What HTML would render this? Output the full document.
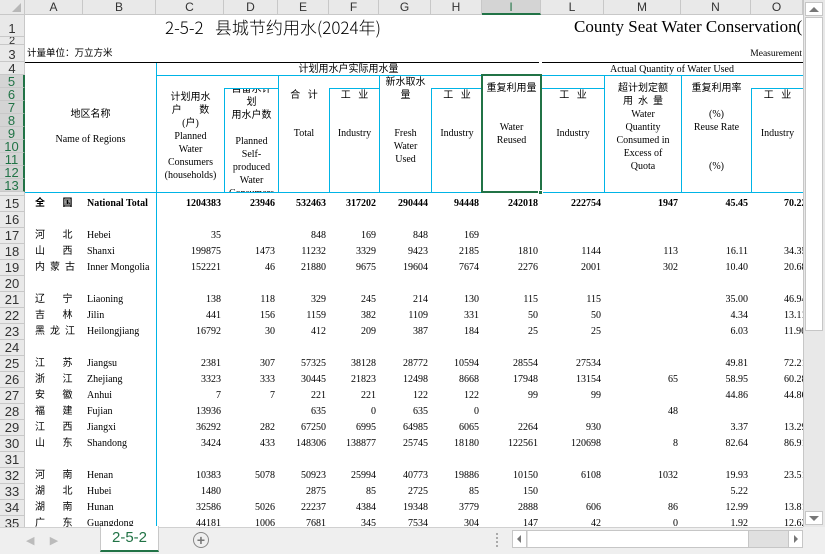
<!DOCTYPE html>
<html><head><meta charset="utf-8">
<style>
*{margin:0;padding:0;box-sizing:border-box}
body{width:825px;height:554px;overflow:hidden;background:#fff;position:relative;font-family:"Liberation Serif","Noto Serif CJK SC",serif;color:#000}
.a{position:absolute}
.ch{position:absolute;top:0;height:15px;background:#e9e9e9;border-right:1px solid #c8c8c8;border-bottom:1px solid #c8c8c8;font:12px "Liberation Sans",sans-serif;color:#333;text-align:center;line-height:15px}
.rh{position:absolute;left:0;width:25px;background:#e9e9e9;border-bottom:1px solid #c8c8c8;border-right:1px solid #c8c8c8;font:13px "Liberation Sans",sans-serif;color:#333;text-align:center;overflow:hidden}
.sel{background:#d4d4d4;color:#217346}
.cy{position:absolute;background:#00b4e6}
.t{position:absolute;text-align:center;font-size:10px;line-height:13px}
.cn{font-family:"Liberation Serif","Noto Sans CJK SC",sans-serif}
#data{position:absolute;left:25px;top:196px;width:778px;height:331px;overflow:hidden}
table{border-collapse:collapse;table-layout:fixed;width:834px;font-size:10px}
td{height:16px;padding:0 3px 0 0;text-align:right;white-space:nowrap;overflow:hidden;line-height:16px}
td.p{text-align:left;padding-left:10px;font-family:"Liberation Serif","Noto Sans CJK SC",sans-serif;letter-spacing:0}
td.e{text-align:left;padding-left:4px}
td.o{text-align:left;padding-left:33px}
tr.b td{font-weight:bold}
</style></head><body>
<div class="ch" style="left:0;width:25px;background:#e9e9e9"><div class="a" style="right:3px;bottom:2px;width:0;height:0;border-left:9px solid transparent;border-bottom:9px solid #b8b8b8"></div></div>
<div class="ch" style="left:25px;width:58px">A</div>
<div class="ch" style="left:83px;width:73px">B</div>
<div class="ch" style="left:156px;width:68px">C</div>
<div class="ch" style="left:224px;width:54px">D</div>
<div class="ch" style="left:278px;width:51px">E</div>
<div class="ch" style="left:329px;width:50px">F</div>
<div class="ch" style="left:379px;width:52px">G</div>
<div class="ch" style="left:431px;width:51px">H</div>
<div class="ch sel" style="left:482px;width:59px;border-bottom:2px solid #217346">I</div>
<div class="ch" style="left:541px;width:63px">L</div>
<div class="ch" style="left:604px;width:77px">M</div>
<div class="ch" style="left:681px;width:70px">N</div>
<div class="ch" style="left:751px;width:52px">O</div>
<div class="rh" style="top:15px;height:22px;line-height:28px">1</div>
<div class="rh" style="top:37px;height:8px;line-height:8px;font-size:11px">2</div>
<div class="rh" style="top:45px;height:17px;line-height:19px">3</div>
<div class="rh" style="top:62px;height:13px;line-height:14px">4</div>
<div class="rh sel" style="top:75px;height:13px;line-height:14px;border-right:2px solid #217346">5</div>
<div class="rh sel" style="top:88px;height:13px;line-height:14px;border-right:2px solid #217346">6</div>
<div class="rh sel" style="top:101px;height:13px;line-height:14px;border-right:2px solid #217346">7</div>
<div class="rh sel" style="top:114px;height:13px;line-height:14px;border-right:2px solid #217346">8</div>
<div class="rh sel" style="top:127px;height:13px;line-height:14px;border-right:2px solid #217346">9</div>
<div class="rh sel" style="top:140px;height:13px;line-height:14px;border-right:2px solid #217346">10</div>
<div class="rh sel" style="top:153px;height:13px;line-height:14px;border-right:2px solid #217346">11</div>
<div class="rh sel" style="top:166px;height:13px;line-height:14px;border-right:2px solid #217346">12</div>
<div class="rh sel" style="top:179px;height:13px;line-height:14px;border-right:2px solid #217346">13</div>
<div class="rh" style="top:192px;height:4px"></div>
<div class="rh" style="top:196px;height:16px;line-height:16px">15</div>
<div class="rh" style="top:212px;height:16px;line-height:16px">16</div>
<div class="rh" style="top:228px;height:16px;line-height:16px">17</div>
<div class="rh" style="top:244px;height:16px;line-height:16px">18</div>
<div class="rh" style="top:260px;height:16px;line-height:16px">19</div>
<div class="rh" style="top:276px;height:16px;line-height:16px">20</div>
<div class="rh" style="top:292px;height:16px;line-height:16px">21</div>
<div class="rh" style="top:308px;height:16px;line-height:16px">22</div>
<div class="rh" style="top:324px;height:16px;line-height:16px">23</div>
<div class="rh" style="top:340px;height:16px;line-height:16px">24</div>
<div class="rh" style="top:356px;height:16px;line-height:16px">25</div>
<div class="rh" style="top:372px;height:16px;line-height:16px">26</div>
<div class="rh" style="top:388px;height:16px;line-height:16px">27</div>
<div class="rh" style="top:404px;height:16px;line-height:16px">28</div>
<div class="rh" style="top:420px;height:16px;line-height:16px">29</div>
<div class="rh" style="top:436px;height:16px;line-height:16px">30</div>
<div class="rh" style="top:452px;height:16px;line-height:16px">31</div>
<div class="rh" style="top:468px;height:16px;line-height:16px">32</div>
<div class="rh" style="top:484px;height:16px;line-height:16px">33</div>
<div class="rh" style="top:500px;height:16px;line-height:16px">34</div>
<div class="rh" style="top:516px;height:16px;line-height:16px">35</div>

<div class="a cn" style="left:165px;top:16px;font-size:17px;line-height:22px;white-space:nowrap;font-family:'Noto Sans CJK SC',sans-serif;font-weight:300">2-5-2&nbsp;&nbsp;&nbsp;县城节约用水(2024年)</div>
<div class="a" style="left:574px;top:16px;width:229px;overflow:hidden;font-size:17px;line-height:22px;white-space:nowrap">County Seat Water Conservation(</div>
<div class="a cn" style="left:27px;top:48px;font-size:9.5px;line-height:13px">计量单位：万立方米</div>
<div class="a" style="left:700px;top:48px;width:102px;text-align:right;font-size:9.5px;line-height:13px">Measurement</div>
<div class="a" style="left:25px;top:62px;width:514px;height:1px;background:#000"></div>
<div class="a" style="left:542px;top:62px;width:261px;height:1px;background:#000"></div>
<div class="cy" style="left:156px;top:63px;width:1px;height:464px"></div>
<div class="cy" style="left:156px;top:75px;width:647px;height:1px"></div>
<div class="cy" style="left:25px;top:192px;width:778px;height:1px"></div>
<div class="cy" style="left:224px;top:88px;width:1px;height:104px"></div>
<div class="cy" style="left:224px;top:88px;width:54px;height:1px"></div>
<div class="cy" style="left:278px;top:75px;width:1px;height:117px"></div>
<div class="cy" style="left:329px;top:88px;width:1px;height:104px"></div>
<div class="cy" style="left:329px;top:88px;width:50px;height:1px"></div>
<div class="cy" style="left:379px;top:75px;width:1px;height:117px"></div>
<div class="cy" style="left:431px;top:88px;width:1px;height:104px"></div>
<div class="cy" style="left:431px;top:88px;width:51px;height:1px"></div>
<div class="cy" style="left:541px;top:75px;width:1px;height:117px"></div>
<div class="cy" style="left:541px;top:88px;width:63px;height:1px"></div>
<div class="cy" style="left:604px;top:75px;width:1px;height:117px"></div>
<div class="cy" style="left:681px;top:75px;width:1px;height:117px"></div>
<div class="cy" style="left:751px;top:88px;width:1px;height:104px"></div>
<div class="cy" style="left:751px;top:88px;width:52px;height:1px"></div>
<div class="a" style="left:481px;top:74px;width:61px;height:119px;border:2px solid #217346"></div>
<div class="a" style="left:538px;top:190px;width:5px;height:5px;background:#217346;border:1px solid #fff"></div>

<div class="t cn" style="left:156px;top:63px;width:385px">计划用水户实际用水量</div>
<div class="t" style="left:541px;top:63px;width:262px">Actual Quantity of Water Used</div>
<div class="t cn" style="left:25px;top:108px;width:131px;font-size:10px">地区名称</div>
<div class="t" style="left:25px;top:133px;width:131px">Name of Regions</div>
<div class="t" style="left:157px;top:91px;width:67px"><span class="cn">计划用水<br>户&nbsp;&nbsp;&nbsp;&nbsp;&nbsp;&nbsp;&nbsp;数<br>(户)</span><br>Planned<br>Water<br>Consumers<br>(households)</div>
<div class="a" style="left:225px;top:89px;width:53px;height:103px;overflow:hidden"><div class="t" style="left:0;top:-6px;width:53px"><span class="cn">自备水计<br>划<br>用水户数</span><br><br>Planned<br>Self-<br>produced<br>Water<br>Consumers</div></div>
<div class="t cn" style="left:279px;top:89px;width:50px">合&nbsp;&nbsp;&nbsp;计</div>
<div class="t" style="left:279px;top:127px;width:50px">Total</div>
<div class="t cn" style="left:330px;top:89px;width:49px">工&nbsp;&nbsp;&nbsp;业</div>
<div class="t" style="left:330px;top:127px;width:49px">Industry</div>
<div class="t cn" style="left:380px;top:76px;width:51px">新水取水<br>量</div>
<div class="t" style="left:380px;top:127px;width:51px">Fresh<br>Water<br>Used</div>
<div class="t cn" style="left:432px;top:89px;width:50px">工&nbsp;&nbsp;&nbsp;业</div>
<div class="t" style="left:432px;top:127px;width:50px">Industry</div>
<div class="t cn" style="left:482px;top:82px;width:59px">重复利用量</div>
<div class="t" style="left:482px;top:121px;width:59px">Water<br>Reused</div>
<div class="t cn" style="left:542px;top:89px;width:62px">工&nbsp;&nbsp;&nbsp;业</div>
<div class="t" style="left:542px;top:127px;width:62px">Industry</div>
<div class="t" style="left:605px;top:82px;width:76px"><span class="cn">超计划定额<br>用&nbsp;&nbsp;水&nbsp;&nbsp;量</span><br>Water<br>Quantity<br>Consumed in<br>Excess of<br>Quota</div>
<div class="t cn" style="left:682px;top:82px;width:69px">重复利用率</div>
<div class="t" style="left:682px;top:108px;width:69px">(%)<br>Reuse Rate</div>
<div class="t" style="left:682px;top:160px;width:69px">(%)</div>
<div class="t cn" style="left:752px;top:89px;width:51px">工&nbsp;&nbsp;&nbsp;业</div>
<div class="t" style="left:752px;top:127px;width:51px">Industry</div>

<div id="data"><table>
<colgroup><col style="width:58px"><col style="width:73px"><col style="width:68px"><col style="width:54px"><col style="width:51px"><col style="width:50px"><col style="width:52px"><col style="width:51px"><col style="width:59px"><col style="width:63px"><col style="width:77px"><col style="width:70px"><col style="width:108px"></colgroup>
<tr class="b"><td class="p">全&nbsp;&nbsp;&nbsp;&nbsp;&nbsp;&nbsp;&nbsp;国</td><td class="e">National Total</td><td>1204383</td><td>23946</td><td>532463</td><td>317202</td><td>290444</td><td>94448</td><td>242018</td><td>222754</td><td>1947</td><td>45.45</td><td class="o">70.22</td></tr>
<tr><td></td><td></td><td></td><td></td><td></td><td></td><td></td><td></td><td></td><td></td><td></td><td></td><td></td></tr>
<tr><td class="p">河&nbsp;&nbsp;&nbsp;&nbsp;&nbsp;&nbsp;&nbsp;北</td><td class="e">Hebei</td><td>35</td><td></td><td>848</td><td>169</td><td>848</td><td>169</td><td></td><td></td><td></td><td></td><td></td></tr>
<tr><td class="p">山&nbsp;&nbsp;&nbsp;&nbsp;&nbsp;&nbsp;&nbsp;西</td><td class="e">Shanxi</td><td>199875</td><td>1473</td><td>11232</td><td>3329</td><td>9423</td><td>2185</td><td>1810</td><td>1144</td><td>113</td><td>16.11</td><td class="o">34.35</td></tr>
<tr><td class="p">内&nbsp;&nbsp;蒙&nbsp;&nbsp;古</td><td class="e">Inner Mongolia</td><td>152221</td><td>46</td><td>21880</td><td>9675</td><td>19604</td><td>7674</td><td>2276</td><td>2001</td><td>302</td><td>10.40</td><td class="o">20.68</td></tr>
<tr><td></td><td></td><td></td><td></td><td></td><td></td><td></td><td></td><td></td><td></td><td></td><td></td><td></td></tr>
<tr><td class="p">辽&nbsp;&nbsp;&nbsp;&nbsp;&nbsp;&nbsp;&nbsp;宁</td><td class="e">Liaoning</td><td>138</td><td>118</td><td>329</td><td>245</td><td>214</td><td>130</td><td>115</td><td>115</td><td></td><td>35.00</td><td class="o">46.94</td></tr>
<tr><td class="p">吉&nbsp;&nbsp;&nbsp;&nbsp;&nbsp;&nbsp;&nbsp;林</td><td class="e">Jilin</td><td>441</td><td>156</td><td>1159</td><td>382</td><td>1109</td><td>331</td><td>50</td><td>50</td><td></td><td>4.34</td><td class="o">13.11</td></tr>
<tr><td class="p">黑&nbsp;&nbsp;龙&nbsp;&nbsp;江</td><td class="e">Heilongjiang</td><td>16792</td><td>30</td><td>412</td><td>209</td><td>387</td><td>184</td><td>25</td><td>25</td><td></td><td>6.03</td><td class="o">11.96</td></tr>
<tr><td></td><td></td><td></td><td></td><td></td><td></td><td></td><td></td><td></td><td></td><td></td><td></td><td></td></tr>
<tr><td class="p">江&nbsp;&nbsp;&nbsp;&nbsp;&nbsp;&nbsp;&nbsp;苏</td><td class="e">Jiangsu</td><td>2381</td><td>307</td><td>57325</td><td>38128</td><td>28772</td><td>10594</td><td>28554</td><td>27534</td><td></td><td>49.81</td><td class="o">72.21</td></tr>
<tr><td class="p">浙&nbsp;&nbsp;&nbsp;&nbsp;&nbsp;&nbsp;&nbsp;江</td><td class="e">Zhejiang</td><td>3323</td><td>333</td><td>30445</td><td>21823</td><td>12498</td><td>8668</td><td>17948</td><td>13154</td><td>65</td><td>58.95</td><td class="o">60.28</td></tr>
<tr><td class="p">安&nbsp;&nbsp;&nbsp;&nbsp;&nbsp;&nbsp;&nbsp;徽</td><td class="e">Anhui</td><td>7</td><td>7</td><td>221</td><td>221</td><td>122</td><td>122</td><td>99</td><td>99</td><td></td><td>44.86</td><td class="o">44.86</td></tr>
<tr><td class="p">福&nbsp;&nbsp;&nbsp;&nbsp;&nbsp;&nbsp;&nbsp;建</td><td class="e">Fujian</td><td>13936</td><td></td><td>635</td><td>0</td><td>635</td><td>0</td><td></td><td></td><td>48</td><td></td><td></td></tr>
<tr><td class="p">江&nbsp;&nbsp;&nbsp;&nbsp;&nbsp;&nbsp;&nbsp;西</td><td class="e">Jiangxi</td><td>36292</td><td>282</td><td>67250</td><td>6995</td><td>64985</td><td>6065</td><td>2264</td><td>930</td><td></td><td>3.37</td><td class="o">13.29</td></tr>
<tr><td class="p">山&nbsp;&nbsp;&nbsp;&nbsp;&nbsp;&nbsp;&nbsp;东</td><td class="e">Shandong</td><td>3424</td><td>433</td><td>148306</td><td>138877</td><td>25745</td><td>18180</td><td>122561</td><td>120698</td><td>8</td><td>82.64</td><td class="o">86.91</td></tr>
<tr><td></td><td></td><td></td><td></td><td></td><td></td><td></td><td></td><td></td><td></td><td></td><td></td><td></td></tr>
<tr><td class="p">河&nbsp;&nbsp;&nbsp;&nbsp;&nbsp;&nbsp;&nbsp;南</td><td class="e">Henan</td><td>10383</td><td>5078</td><td>50923</td><td>25994</td><td>40773</td><td>19886</td><td>10150</td><td>6108</td><td>1032</td><td>19.93</td><td class="o">23.51</td></tr>
<tr><td class="p">湖&nbsp;&nbsp;&nbsp;&nbsp;&nbsp;&nbsp;&nbsp;北</td><td class="e">Hubei</td><td>1480</td><td></td><td>2875</td><td>85</td><td>2725</td><td>85</td><td>150</td><td></td><td></td><td>5.22</td><td></td></tr>
<tr><td class="p">湖&nbsp;&nbsp;&nbsp;&nbsp;&nbsp;&nbsp;&nbsp;南</td><td class="e">Hunan</td><td>32586</td><td>5026</td><td>22237</td><td>4384</td><td>19348</td><td>3779</td><td>2888</td><td>606</td><td>86</td><td>12.99</td><td class="o">13.81</td></tr>
<tr><td class="p">广&nbsp;&nbsp;&nbsp;&nbsp;&nbsp;&nbsp;&nbsp;东</td><td class="e">Guangdong</td><td>44181</td><td>1006</td><td>7681</td><td>345</td><td>7534</td><td>304</td><td>147</td><td>42</td><td>0</td><td>1.92</td><td class="o">12.62</td></tr>
</table></div>

<div class="a" style="left:803px;top:0;width:22px;height:527px;background:#e8e8e8;border-left:1px solid #c6c6c6"></div>
<div class="a" style="left:805px;top:2px;width:18px;height:14px;background:#fff;border:1px solid #c6c6c6"></div>
<div class="a" style="left:809px;top:7px;width:0;height:0;border-left:5px solid transparent;border-right:5px solid transparent;border-bottom:5px solid #777"></div>
<div class="a" style="left:805px;top:17px;width:18px;height:314px;background:#fff;border:1px solid #c6c6c6"></div>
<div class="a" style="left:805px;top:511px;width:18px;height:14px;background:#fff;border:1px solid #c6c6c6"></div>
<div class="a" style="left:809px;top:516px;width:0;height:0;border-left:5px solid transparent;border-right:5px solid transparent;border-top:5px solid #777"></div>

<div class="a" style="left:0;top:527px;width:825px;height:27px;background:#efefef;border-top:1px solid #d0d0d0"></div>
<div class="a" style="left:26px;top:534px;font:11px 'Liberation Sans',sans-serif;color:#bbb">◀&nbsp;&nbsp;&nbsp;&nbsp;&nbsp;▶</div>
<div class="a" style="left:100px;top:526px;width:59px;height:26px;background:#fff;border-left:1px solid #c8c8c8;border-right:1px solid #c8c8c8;border-bottom:2px solid #217346;text-align:center;font:15px 'Liberation Sans',sans-serif;line-height:24px;color:#217346">2-5-2</div>
<div class="a" style="left:193px;top:532px;width:16px;height:16px;border:1px solid #888;border-radius:50%;text-align:center;font:bold 14px/14px 'Liberation Sans',sans-serif;color:#777">+</div>
<div class="a" style="left:496px;top:533px;width:1px;height:14px;border-left:2px dotted #aaa"></div>
<div class="a" style="left:512px;top:530px;width:291px;height:18px;background:#e0e0e0;border:1px solid #c6c6c6"></div>
<div class="a" style="left:513px;top:531px;width:14px;height:16px;background:#fff;border-right:1px solid #c6c6c6"></div>
<div class="a" style="left:517px;top:535px;width:0;height:0;border-top:4px solid transparent;border-bottom:4px solid transparent;border-right:4px solid #777"></div>
<div class="a" style="left:528px;top:531px;width:221px;height:16px;background:#fff;border-right:1px solid #c6c6c6"></div>
<div class="a" style="left:788px;top:531px;width:14px;height:16px;background:#fff;border-left:1px solid #c6c6c6"></div>
<div class="a" style="left:794px;top:535px;width:0;height:0;border-top:4px solid transparent;border-bottom:4px solid transparent;border-left:4px solid #777"></div>
<div class="a" style="left:803px;top:527px;width:22px;height:27px;background:#efefef"></div>
</body></html>
